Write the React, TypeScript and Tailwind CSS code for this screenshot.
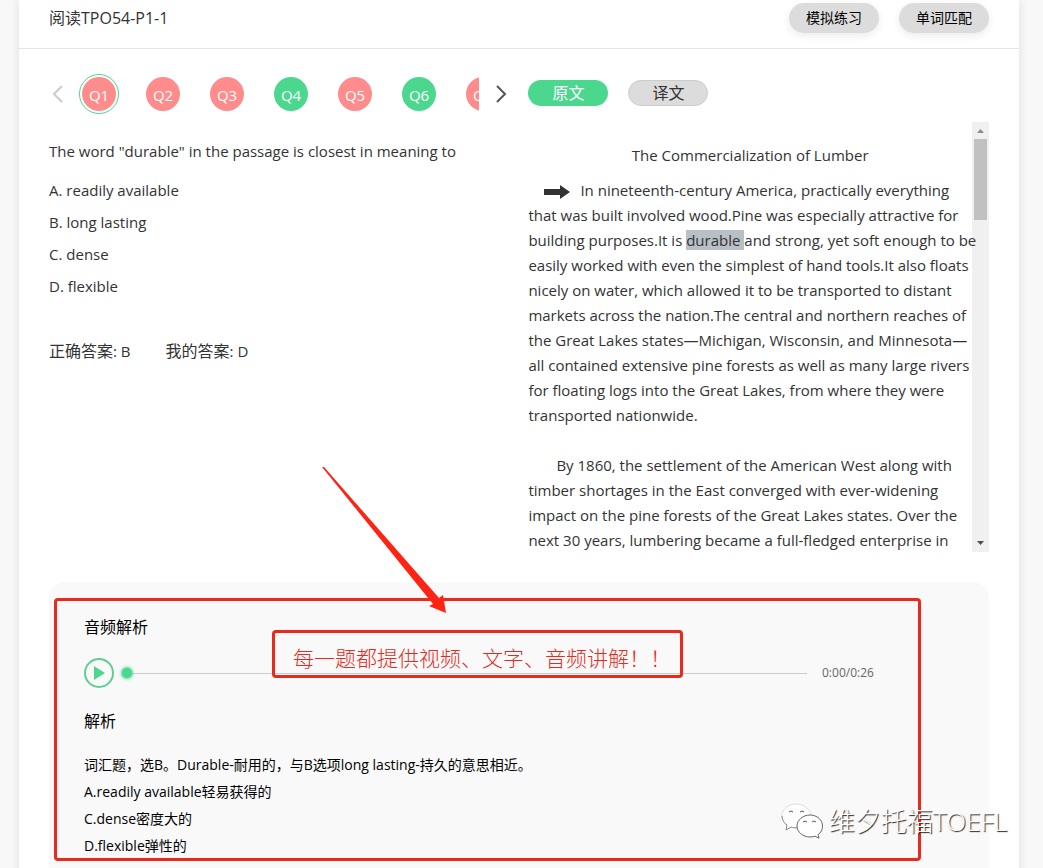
import React, { useState } from 'react';
import clsx from 'clsx';

const questions = [
  { name: 'Q1', correct: false },
  { name: 'Q2', correct: false },
  { name: 'Q3', correct: false },
  { name: 'Q4', correct: true },
  { name: 'Q5', correct: false },
  { name: 'Q6', correct: true },
  { name: 'Q7', correct: false },
];

const options = ['A. readily available', 'B. long lasting', 'C. dense', 'D. flexible'];

const Header = () => (
  <header className="flex items-center justify-between border-b border-[#e6e6e6] px-[30px] pt-[3px] pb-[15px]">
    <h1 className="text-[#333]">阅读TPO54-P1-1</h1>
    <div className="flex gap-5 text-sm text-black">
      <button className="h-[30px] w-[90px] rounded-full bg-[#dcdcdc] shadow-[0_3px_8px_rgba(0,0,0,0.08)]">模拟练习</button>
      <button className="h-[30px] w-[90px] rounded-full bg-[#dcdcdc] shadow-[0_3px_8px_rgba(0,0,0,0.08)]">单词匹配</button>
    </div>
  </header>
);

const QuestionNav = ({ current, setCurrent }: any) => (
  <nav className="flex h-10 items-center">
    <button aria-label="上一题" className="w-[30px] pl-1 text-[#ccc]">
      <svg width="10" height="18" viewBox="0 0 10 18" fill="none" stroke="currentColor" strokeWidth="2">
        <path d="M9 1 1 9l8 8" />
      </svg>
    </button>
    <div className="flex w-[400px] gap-6 overflow-hidden">
      {questions.map((item) => (
        <button
          key={item.name}
          onClick={() => setCurrent(item.name)}
          className={clsx(
            'flex size-10 shrink-0 items-center justify-center rounded-full border',
            current === item.name ? 'border-[#4cd78e]' : 'border-transparent'
          )}
        >
          <span
            className={clsx(
              'flex size-[34px] items-center justify-center rounded-full pt-0.5 text-[15px] text-white',
              item.correct ? 'bg-[#4cd78e]' : 'bg-[#ff8c8c]'
            )}
          >
            {item.name}
          </span>
        </button>
      ))}
    </div>
    <button aria-label="下一题" className="pl-4 text-[#555]">
      <svg width="12" height="18" viewBox="0 0 12 18" fill="none" stroke="currentColor" strokeWidth="2">
        <path d="m2 1 8 8-8 8" />
      </svg>
    </button>
  </nav>
);

const Passage = () => (
  <div className="mt-2 flex h-[430px]">
    <article className="z-1 min-w-0 flex-1 text-[15px] leading-[25px] whitespace-nowrap text-[#333]">
      <h2 className="mt-[21px] mb-2.5 text-center">The Commercialization of Lumber</h2>
      <p>
        <svg className="mr-2.5 ml-4 inline-block" width="26" height="14" viewBox="0 0 26 14" fill="#333">
          <path d="M0 4h16V0l10 7-10 7v-4H0z" />
        </svg>
        In nineteenth-century America, practically everything<br />
        that was built involved wood.Pine was especially attractive for<br />
        building purposes.It is <mark className="bg-[#b9c0c5] text-[#333]">durable </mark>and strong, yet soft enough to be<br />
        easily worked with even the simplest of hand tools.It also floats<br />
        nicely on water, which allowed it to be transported to distant<br />
        markets across the nation.The central and northern reaches of<br />
        the Great Lakes states—Michigan, Wisconsin, and Minnesota—<br />
        all contained extensive pine forests as well as many large rivers<br />
        for floating logs into the Great Lakes, from where they were<br />
        transported nationwide.
      </p>
      <p className="mt-[25px] indent-7">
        By 1860, the settlement of the American West along with<br />
        timber shortages in the East converged with ever-widening<br />
        impact on the pine forests of the Great Lakes states. Over the<br />
        next 30 years, lumbering became a full-fledged enterprise in
      </p>
    </article>
    <div className="flex w-[17px] shrink-0 flex-col items-center bg-[#f0f0f0]">
      <svg width="17" height="17" viewBox="0 0 17 17" fill="#8c8c8c">
        <path d="M5 11h7L8.500 7z" />
      </svg>
      <div className="h-[81px] w-[13px] bg-[#c1c1c1]" />
      <svg className="mt-auto" width="17" height="17" viewBox="0 0 17 17" fill="#505050">
        <path d="M5 6h7l-3.500 4z" />
      </svg>
    </div>
  </div>
);

const Analysis = () => (
  <section className="relative mt-[30px] rounded-2xl bg-[#f9f9f9] px-[35px] pt-[33px] pb-10 text-black">
    <h3 className="leading-6">音频解析</h3>
    <div className="mt-[19px] flex items-center pr-[79px]">
      <button aria-label="播放" className="flex size-[30px] shrink-0 items-center justify-center rounded-full border-2 border-[#5bcf94]">
        <svg width="12" height="16" viewBox="0 0 12 16" fill="#4cd78e">
          <path d="M1 1v14l11-7z" />
        </svg>
      </button>
      <input
        type="range"
        aria-label="播放进度"
        defaultValue={0}
        className="mr-[15px] ml-2 h-px min-w-0 flex-1 appearance-none bg-[#ccc] [&::-webkit-slider-thumb]:size-[10px] [&::-webkit-slider-thumb]:appearance-none [&::-webkit-slider-thumb]:rounded-full [&::-webkit-slider-thumb]:bg-[#4cd78e] [&::-webkit-slider-thumb]:shadow-[0_0_3px_1px_#4cd78e]"
      />
      <span className="w-[53px] text-xs whitespace-nowrap text-[#666]">0:00/0:26</span>
    </div>
    <h3 className="mt-[21px] leading-6">解析</h3>
    <div className="mt-[18px] text-sm leading-[27px]">
      <p>词汇题，选B。Durable-耐用的，与B选项long lasting-持久的意思相近。</p>
      <p>A.readily available轻易获得的</p>
      <p>C.dense密度大的</p>
      <p>D.flexible弹性的</p>
    </div>

    <div className="pointer-events-none absolute top-4 right-[68px] left-[5px] h-[263px] rounded-sm border-3 border-[#e8291c]" />
    <div className="absolute top-[48px] left-[223px] flex h-12 w-[411px] items-center rounded-sm border-3 border-[#e8291c] pt-2.5 pl-[18px] text-[21px] font-light whitespace-nowrap text-[#e8291c]">
      每一题都提供视频、文字、音频讲解！！
    </div>
    <svg className="pointer-events-none absolute -top-[115px] left-[273px]" width="125" height="147" viewBox="0 0 125 147" fill="#ff2314">
      <path d="M0 0h2l115 131 4-3 3 18-17-7 4-2z" />
    </svg>
    <div className="absolute top-[221px] -right-[18px] flex items-center gap-1.5">
      <svg width="42" height="36" viewBox="0 0 42 36" fill="#fff" stroke="#666" strokeWidth="1">
        <path d="M15 1C7 1 1 6.500 1 13c0 4 2 7 5 9l-1 5 5-3c2 .7 3.500.8 6 .8C24 24.500 30 19 30 13S23.500 1 15 1z" stroke="#ddd" />
        <path d="M1 13c0 4 2 7 5 9l-1 5 5-3c2 .7 3.500.8 6 .8" stroke="#888" />
        <path d="M29 12c-7 0-13 5-13 11s6 11 13 11c2 0 3.500-.3 5-.8l4 2-1-3.500c3-2 4.500-5 4.500-8.700C41.500 17 36 12 29 12z" />
        <path d="M8 9q2-2 4 0M19 9q2-2 4 0M22 19q2-2 4 0M31 19q2-2 4 0" fill="none" stroke="#555" />
      </svg>
      <span className="text-[26px] leading-9 font-light whitespace-nowrap text-white [text-shadow:1px_1px_1px_#222]">维夕托福TOEFL</span>
    </div>
  </section>
);

const App = () => {
  const [current, setCurrent] = useState('Q1');
  const [original, setOriginal] = useState(true);

  return (
    <div className="min-h-screen bg-[#f8f8f8] pr-6 pl-[19px] font-['Open_Sans','Noto_Sans_CJK_SC',sans-serif]">
      <main className="bg-white shadow-[0_0_10px_rgba(0,0,0,0.1)]">
        <Header />
        <div className="px-[30px] pt-[25px] pb-8">
          <div className="flex">
            <div className="w-[51%] text-[15px] text-[#333]">
              <QuestionNav current={current} setCurrent={setCurrent} />
              <p className="mt-[25px] leading-6">The word "durable" in the passage is closest in meaning to</p>
              <ul className="mt-[11px] leading-8">
                {options.map((option) => (
                  <li key={option}>{option}</li>
                ))}
              </ul>
              <div className="mt-[37px] flex gap-[35px] leading-6">
                <p><span className="text-base">正确答案</span>: B</p>
                <p><span className="text-base">我的答案</span>: D</p>
              </div>
            </div>
            <div className="w-[49%]">
              <div className="flex h-10 items-center gap-5 pb-0.5 text-base">
                <button
                  onClick={() => setOriginal(true)}
                  className={clsx('h-[26px] w-20 rounded-full leading-6', original ? 'bg-[#4cd78e] text-white' : 'border border-[#ccc] bg-[#dcdcdc] text-[#333]')}
                >
                  原文
                </button>
                <button
                  onClick={() => setOriginal(false)}
                  className={clsx('h-[26px] w-20 rounded-full leading-6', !original ? 'bg-[#4cd78e] text-white' : 'border border-[#ccc] bg-[#dcdcdc] text-[#333]')}
                >
                  译文
                </button>
              </div>
              <Passage />
            </div>
          </div>
          <Analysis />
        </div>
      </main>
    </div>
  );
};

export default App;
